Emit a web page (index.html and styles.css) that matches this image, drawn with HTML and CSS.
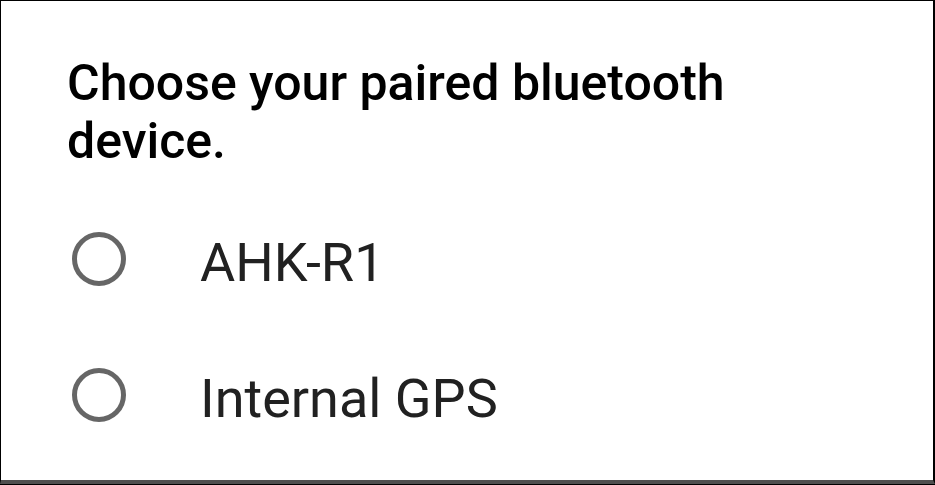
FILE: index.html
```html
<!DOCTYPE html>
<html>
<head>
<meta charset="utf-8">
<link rel="stylesheet" href="styles.css">
</head>
<body>
<div class="frame">
  <div class="dialog">
    <h1 class="title">Choose your paired bluetooth device.</h1>
    <div class="options">
      <label class="option">
        <span class="radio"></span>
        <span class="label">AHK-R1</span>
      </label>
      <label class="option">
        <span class="radio"></span>
        <span class="label">Internal GPS</span>
      </label>
    </div>
  </div>
</div>
</body>
</html>
```
FILE: styles.css
```css
html, body {
  margin: 0;
  padding: 0;
  background: #ffffff;
}
.frame {
  width: 935px;
  height: 485px;
  box-sizing: border-box;
  border-bottom: 1px solid #000;
}
.dialog {
  height: 484px;
  box-sizing: border-box;
  border-top: 1px solid #000;
  border-left: 1px solid #000;
  border-right: 2px solid #000;
  border-bottom: 4px solid #4f4f4f;
  background: #fff;
  padding: 53px 0 0 66px;
  font-family: Roboto, "Noto Sans", sans-serif;
}
.title {
  margin: 0;
  width: 760px;
  font-size: 50px;
  font-weight: 500;
  line-height: normal;
  color: #000;
}
.options {
  display: flex;
  flex-direction: column;
  margin-top: 21px;
}
.option {
  display: flex;
  align-items: center;
  height: 136px;
}
.radio {
  width: 54px;
  height: 54px;
  box-sizing: border-box;
  border: 5px solid #666;
  border-radius: 50%;
  margin-left: 5px;
  flex: none;
}
.label {
  margin-left: 74px;
  margin-top: 6px;
  font-size: 54px;
  font-weight: 400;
  line-height: normal;
  color: #212121;
}
```
